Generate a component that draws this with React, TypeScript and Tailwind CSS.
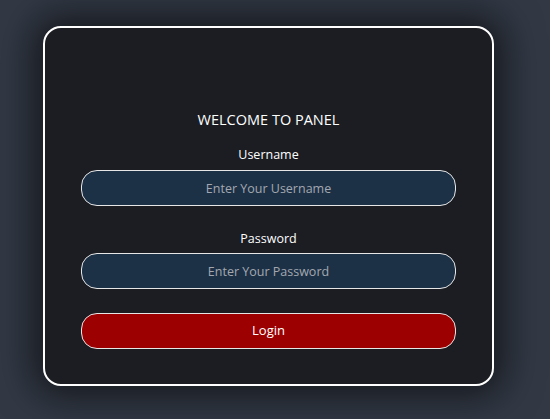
import React from "react";

export default function App() {
  return (
    <div
      className="w-[550px] h-[419px] bg-[#323945] overflow-hidden pt-[26px] pl-[43px]"
      style={{ fontFamily: '"Open Sans", "Noto Sans", sans-serif' }}
    >
      <div className="w-[451px] h-[360px] rounded-[18px] border-2 border-white bg-[#1b1d23] shadow-[0_0_36px_12px_rgba(0,0,0,0.55)] px-[36px] pt-[80px] flex flex-col">
        <h1 className="text-center text-white text-[14.5px] leading-[24px]">WELCOME TO PANEL</h1>
        <label className="mt-[12px] text-center text-white text-[12.5px] font-medium leading-[21px]">Username</label>
        <input
          type="text"
          placeholder="Enter Your Username"
          className="mt-[5px] h-[36px] w-full rounded-[16px] border border-[#e6e6e6] bg-[#1d3146] text-center text-[12.5px] text-white placeholder:text-[#a3a8b0] outline-none"
        />
        <label className="mt-[22px] text-center text-white text-[12.5px] font-medium leading-[21px]">Password</label>
        <input
          type="password"
          placeholder="Enter Your Password"
          className="mt-[4px] h-[36px] w-full rounded-[16px] border border-[#e6e6e6] bg-[#1d3146] text-center text-[12.5px] text-white placeholder:text-[#a3a8b0] outline-none"
        />
        <button className="mt-[24px] h-[36px] w-full rounded-[16px] border border-[#e6e6e6] bg-[#9c0000] text-center text-[13px] text-white">
          Login
        </button>
      </div>
    </div>
  );
}
